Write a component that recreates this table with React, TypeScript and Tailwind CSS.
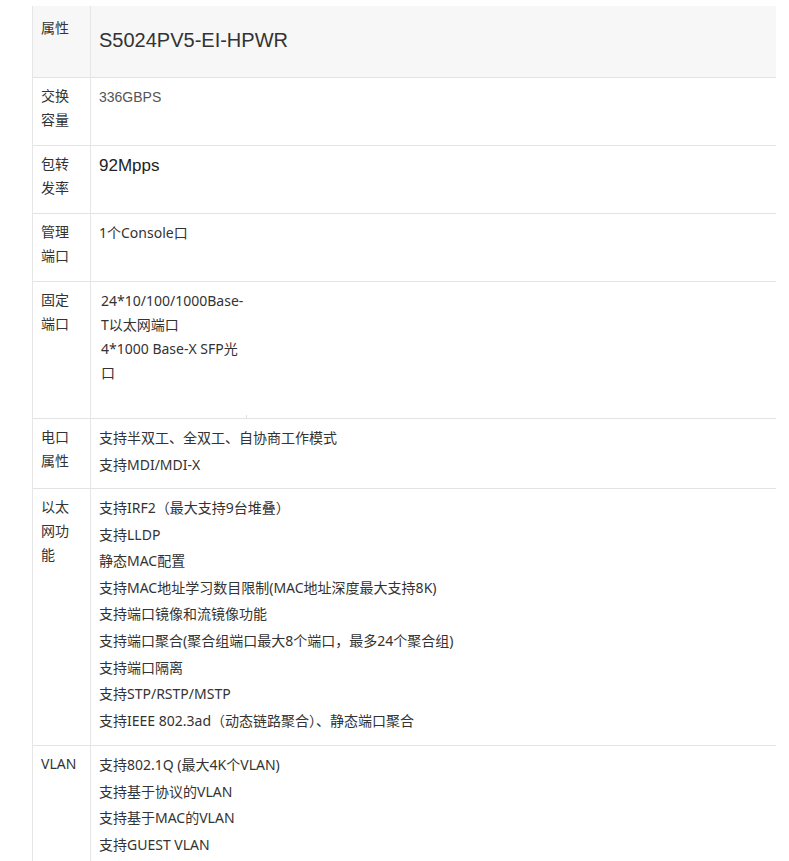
const font = "font-['Noto_Sans','Noto_Sans_CJK_SC',sans-serif]";

type Row = {
  label: string[];
  lines: string[];
  height: string;
};

const rows: Row[] = [
  {
    label: ["电口", "属性"],
    lines: ["支持半双工、全双工、自协商工作模式", "支持MDI/MDI-X"],
    height: "h-[70px]",
  },
  {
    label: ["以太", "网功", "能"],
    lines: [
      "支持IRF2（最大支持9台堆叠）",
      "支持LLDP",
      "静态MAC配置",
      "支持MAC地址学习数目限制(MAC地址深度最大支持8K)",
      "支持端口镜像和流镜像功能",
      "支持端口聚合(聚合组端口最大8个端口，最多24个聚合组)",
      "支持端口隔离",
      "支持STP/RSTP/MSTP",
      "支持IEEE 802.3ad（动态链路聚合）、静态端口聚合",
    ],
    height: "h-[257px]",
  },
  {
    label: ["VLAN"],
    lines: ["支持802.1Q (最大4K个VLAN)", "支持基于协议的VLAN", "支持基于MAC的VLAN", "支持GUEST VLAN"],
    height: "h-[140px]",
  },
];

function Label({ lines, top = "pt-[6px]" }: { lines: string[]; top?: string }) {
  return (
    <div className={`w-[58px] shrink-0 border-r border-[#e6e6e6] pl-2 ${top} text-[14px] leading-[24px] text-[#333]`}>
      {lines.map((l) => (
        <div key={l}>{l}</div>
      ))}
    </div>
  );
}

export default function App() {
  return (
    <div className={`min-h-screen bg-white pt-[6px] ${font}`}>
      <div className="ml-[32px] w-[744px] border-l border-[#e6e6e6]">
        {/* header */}
        <div className="flex h-[72px] border-b border-[#e3e3e3] bg-[#f7f7f7]">
          <Label lines={["属性"]} top="pt-[10px]" />
          <div className="pl-2 pt-[20px] font-['Liberation_Sans',sans-serif] text-[20px] leading-[28px] text-[#333]">
            S5024PV5-EI-HPWR
          </div>
        </div>

        <div className="flex h-[68px] border-b border-[#e3e3e3]">
          <Label lines={["交换", "容量"]} />
          <div className="pl-2 pt-[7px] font-['Liberation_Sans',sans-serif] text-[14px] leading-[24px] text-[#555]">
            336GBPS
          </div>
        </div>

        <div className="flex h-[68px] border-b border-[#e3e3e3]">
          <Label lines={["包转", "发率"]} />
          <div className="pl-2 pt-[8px] font-['Liberation_Sans',sans-serif] text-[17px] leading-[24px] text-[#222]">
            92Mpps
          </div>
        </div>

        <div className="flex h-[68px] border-b border-[#e3e3e3]">
          <Label lines={["管理", "端口"]} />
          <div className="pl-2 pt-[7px] text-[14px] leading-[24px] text-[#333]">1个Console口</div>
        </div>

        <div className="flex h-[137px] border-b border-[#e3e3e3]">
          <Label lines={["固定", "端口"]} />
          <div className="flex flex-col justify-between pl-[10px] pt-[7px] text-[14px] leading-[24px] text-[#333]">
            <div>
              24*10/100/1000Base-
              <br />
              T以太网端口
              <br />
              4*1000 Base-X SFP光
              <br />口
            </div>
            <div className="ml-[145px] h-[3px] w-px bg-[#ddd]" />
          </div>
        </div>

        {rows.map((r) => (
          <div key={r.label.join("")} className={`flex ${r.height} border-b border-[#e3e3e3]`}>
            <Label lines={r.label} />
            <div className="pl-2 pt-[6px] text-[14px] leading-[26.6px] text-[#333]">
              {r.lines.map((l) => (
                <p key={l}>{l}</p>
              ))}
            </div>
          </div>
        ))}
      </div>
    </div>
  );
}
